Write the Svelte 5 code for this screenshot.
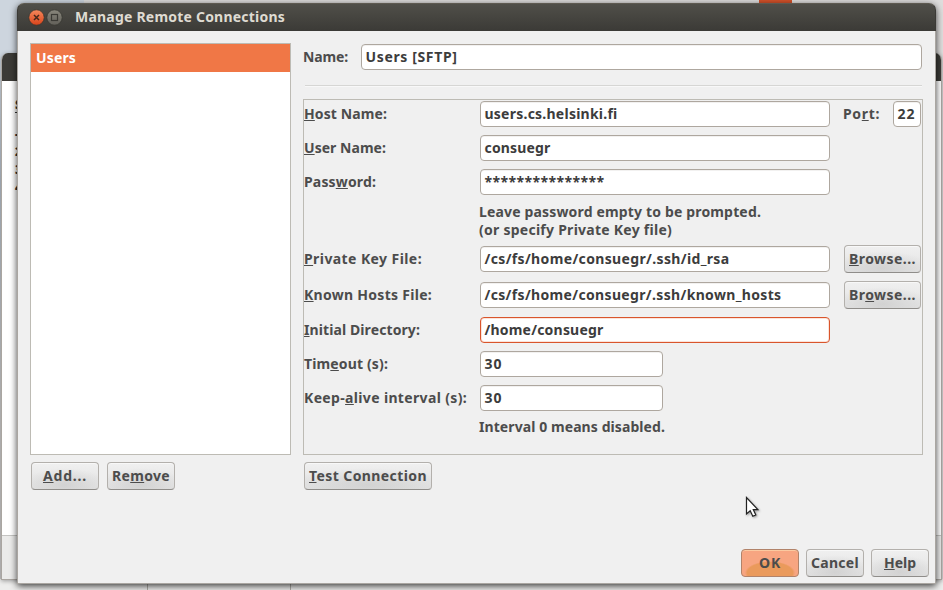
<script>
  const connections = ['Users'];

  // "_" marks the keyboard mnemonic that follows it
  const rows = [
    { label: '_Host Name:', lw: 83, value: 'users.cs.helsinki.fi', vw: 133, port: true },
    { label: '_User Name:', lw: 82, value: 'consuegr', vw: 66 },
    { label: 'Pass_word:', lw: 72, value: '***************', vw: 120, secret: true },
    { hint: [['Leave password empty to be prompted.', 282], ['(or specify Private Key file)', 193]] },
    { label: '_Private Key File:', lw: 118, value: '/cs/fs/home/consuegr/.ssh/id_rsa', vw: 245, browse: '_Browse...' },
    { label: '_Known Hosts File:', lw: 128, value: '/cs/fs/home/consuegr/.ssh/known_hosts', vw: 297, browse: 'Br_owse...' },
    { label: '_Initial Directory:', lw: 116, value: '/home/consuegr', vw: 119, focus: true },
    { label: 'Tim_eout (s):', lw: 84, value: '30', vw: 18, short: true },
    { label: 'Keep-_alive interval (s):', lw: 163, value: '30', vw: 18, short: true },
    { hint: [['Interval 0 means disabled.', 186]] }
  ];

  function parts(s) {
    const i = s.indexOf('_');
    return i < 0 ? [s, '', ''] : [s.slice(0, i), s[i + 1], s.slice(i + 2)];
  }

  // Tracks a label out to the given advance width
  function fit(node, width) {
    const n = node.textContent.length;
    const natural = node.getBoundingClientRect().width;
    node.style.letterSpacing = (width - natural) / n + 'px';
  }
</script>

{#snippet mnemonic(s, w)}
  {@const p = parts(s)}
  <span class="t" use:fit={w}>{p[0]}<u>{p[1]}</u>{p[2]}</span>
{/snippet}

<div class="desktop">
  <div class="panel-left"></div>
  <div class="panel-tab"></div>
  <div class="strip"><i></i><i></i></div>

  <div class="behind">
    <div class="behind-title"></div>
    <div class="behind-body">
      <b class="s">S</b>
      <b>-</b><b>2</b><b>3</b><b>4</b>
    </div>
    <div class="behind-status"></div>
  </div>

  <div class="window">
    <header>
      <svg width="38" height="18" viewBox="0 0 38 18">
        <defs>
          <linearGradient id="close" x1="0" y1="0" x2="0" y2="1">
            <stop offset="0" stop-color="#f6895c" /><stop offset="1" stop-color="#d9431a" />
          </linearGradient>
          <linearGradient id="max" x1="0" y1="0" x2="0" y2="1">
            <stop offset="0" stop-color="#88867c" /><stop offset="1" stop-color="#626059" />
          </linearGradient>
        </defs>
        <circle cx="8.5" cy="9.5" r="7.7" fill="url(#close)" stroke="#34332e" stroke-width=".7" />
        <path d="M6 7l5 5M11 7l-5 5" stroke="#46281b" stroke-width="1.5" />
        <circle cx="26.5" cy="9.5" r="7.7" fill="url(#max)" stroke="#34332e" stroke-width=".7" />
        <rect x="23.5" y="6.5" width="6" height="6" fill="none" stroke="#3b3a35" stroke-width="1.2" />
      </svg>
      <span class="t" use:fit={210}>Manage Remote Connections</span>
    </header>

    <main>
      <section class="left">
        <div class="list">
          {#each connections as c}
            <div class="item"><span class="t" use:fit={40}>{c}</span></div>
          {/each}
        </div>
        <div class="actions">
          <div class="btn w68">{@render mnemonic('_Add...', 44)}</div>
          <div class="btn w68">{@render mnemonic('Re_move', 58)}</div>
        </div>
      </section>

      <section class="right">
        <div class="name-row">
          <div class="name-label"><span class="t" use:fit={45}>Name:</span></div>
          <div class="entry grow"><span class="t" use:fit={92}>Users [SFTP]</span></div>
        </div>
        <div class="rule"></div>
        <div class="frame">
          {#each rows as r}
            {#if r.hint}
              <div class="hint">
                {#each r.hint as [line, w]}
                  <div><span class="t" use:fit={w}>{line}</span></div>
                {/each}
              </div>
            {:else}
              <div class="row">
                <div class="label">{@render mnemonic(r.label, r.lw)}</div>
                <div class="entry" class:short={r.short} class:focus={r.focus} class:secret={r.secret}>
                  <span class="t" use:fit={r.vw}>{r.value}</span>
                </div>
                {#if r.port}
                  <div class="port">{@render mnemonic('Po_rt:', 37)}</div>
                  <div class="entry port-entry"><span class="t" use:fit={18}>22</span></div>
                {/if}
                {#if r.browse}
                  <div class="btn browse">{@render mnemonic(r.browse, 67)}</div>
                {/if}
              </div>
            {/if}
          {/each}
        </div>
        <div class="btn test">{@render mnemonic('_Test Connection', 118)}</div>
      </section>
    </main>

    <footer>
      <div class="btn ok"><span class="t" use:fit={22}>OK</span></div>
      <div class="btn"><span class="t" use:fit={48}>Cancel</span></div>
      <div class="btn">{@render mnemonic('_Help', 32)}</div>
    </footer>
  </div>

  <svg class="cursor" width="16" height="23" viewBox="0 0 16 23">
    <path d="M1.5 1.5V18l3.7-3.3L7.8 20.2l3-1.3-2.5-5.3h4.6z" fill="#fff" stroke="#222" stroke-width="1.2" />
  </svg>
</div>

<style>
  :global(body) { margin: 0; }
  * { box-sizing: border-box; }
  .desktop {
    position: relative; width: 943px; height: 590px; overflow: hidden; background: #dedddc;
    font: 700 14px/18px "Noto Sans", "Open Sans", sans-serif; color: #4c4c4c;
  }
  .t { white-space: pre; display: inline-block; }
  u { text-decoration: underline; text-decoration-thickness: 1px; text-underline-offset: 1px; text-decoration-skip-ink: none; }

  .panel-left { position: absolute; left: 0; top: 0; width: 84px; height: 590px; background: linear-gradient(#cdd5de 0 80px, #b4bdc9 180px, #c9c8c7 420px); }
  .panel-tab { position: absolute; left: 759px; top: 0; width: 33px; height: 4px; background: #d4522a; }
  .strip { position: absolute; left: 0; bottom: 0; width: 943px; height: 11px; background: #ededec; }
  .strip i { position: absolute; top: 0; width: 1px; height: 11px; background: #b0afa9; left: 147px; }
  .strip i + i { left: 290px; }

  .behind {
    position: absolute; left: 1px; top: 53px; width: 941px; height: 527px;
    display: flex; flex-direction: column; border: 1px solid #aaa6a1; border-top: 0;
    border-radius: 7px 7px 0 0; background: #f0f0f0; overflow: hidden;
    box-shadow: 0 1px 4px rgba(0, 0, 0, .35);
  }
  .behind-title { height: 28px; background: #3c3b37; margin: 0 -1px; flex: none; }
  .behind-body {
    height: 455px; padding: 14px 0 0 13px; background: #fff; border-bottom: 1px solid #c4c4c2; flex: none;
    display: flex; flex-direction: column; font-size: 13px; color: #333;
  }
  .behind-body .s { margin-bottom: 11px; text-decoration: underline; text-underline-offset: 3px; text-decoration-thickness: 1px; }
  .behind-status { flex: 1; background: #ebebea; }

  .window {
    position: absolute; left: 17px; top: 3px; width: 919px; height: 581px;
    display: flex; flex-direction: column; background: #f0f0f0;
    border: 1px solid #aaa6a1; border-top: 0; border-radius: 7px 7px 0 0;
    box-shadow: 0 2px 7px rgba(0, 0, 0, .75);
  }
  header {
    height: 28px; margin: 0 -1px; padding: 0 0 0 10px; display: flex; align-items: center; flex: none;
    background: linear-gradient(#504f49, #3c3b37); border: 1px solid #3b3a36; border-top-color: #5e5a51;
    border-radius: 7px 7px 0 0; color: #dfdbd2;
  }
  header svg { margin-right: 9px; }

  main { display: flex; padding: 12px 11px 0 12px; flex: 1; }
  .left { width: 261px; margin-right: 12px; }
  .list { height: 412px; border: 1px solid #bdbbb4; background: #fff; }
  .item { height: 28px; padding: 5px; background: #f07746; color: #fff; }
  .actions { display: flex; gap: 8px; padding: 7px 0 0 1px; }
  .w68 { width: 68px; }

  .right { flex: 1; display: flex; flex-direction: column; }
  .name-row { display: flex; align-items: center; height: 26px; margin-top: 1px; padding-right: 2px; }
  .name-label { width: 58px; }
  .entry {
    width: 350px; height: 26px; padding: 3px 3.5px; background: #fff; color: #3c3c3c; flex: none;
    border: 1px solid #aea79f; border-radius: 4px; box-shadow: inset 0 1px 0 #f2f1f0;
  }
  .entry.grow { flex: 1; }
  .entry.short { width: 183px; }
  .entry.focus { border-color: #d9552c; box-shadow: inset 0 0 0 1px #fbe3da; }
  .rule { height: 2px; margin: 15px 2px 12px; border-top: 1px solid #d6d6d4; border-bottom: 1px solid #f8f8f8; }
  .frame { height: 356px; padding: 1px 1px 0 0; border: 1px solid #bdbbb4; display: flex; flex-direction: column; gap: 8px; width: 620px; }
  .row { display: flex; align-items: center; height: 26px; flex: none; }
  .row:has(.browse) { height: 28px; }
  .label { width: 176px; flex: none; }
  .hint { padding-left: 175px; margin-bottom: -2px; flex: none; }
  .row + .hint:last-child { margin-top: -1px; }
  .port { width: 50px; margin-left: 13px; }
  .port-entry { width: 28px; }

  .btn {
    height: 28px; display: flex; align-items: center; justify-content: center; flex: none;
    border: 1px solid #b3b0ac; border-bottom-color: #8f8d8a; border-radius: 4px;
    background: radial-gradient(ellipse 65% 65% at 50% 85%, #d2d2d2, rgba(210, 210, 210, 0)), linear-gradient(#f0f0f0, #e2e2e2);
    box-shadow: inset 0 1px 0 #f8f8f8;
  }
  .browse { width: 77px; margin-left: 14px; }
  .test { width: 128px; margin: 7px 0 0 1px; }
  footer { display: flex; justify-content: flex-end; gap: 7px; padding: 0 6px 6px 0; }
  footer .btn { width: 58px; }
  .ok {
    border-color: #b1836a; box-shadow: inset 0 1px 0 #fbc9a0;
    background: radial-gradient(ellipse 45% 45% at 50% 88%, #ea9a5c 90%, rgba(234, 154, 92, 0)), #f7a581;
  }
  .cursor { position: absolute; left: 745px; top: 496px; filter: drop-shadow(1px 1px 1px rgba(0, 0, 0, .35)); }
</style>
